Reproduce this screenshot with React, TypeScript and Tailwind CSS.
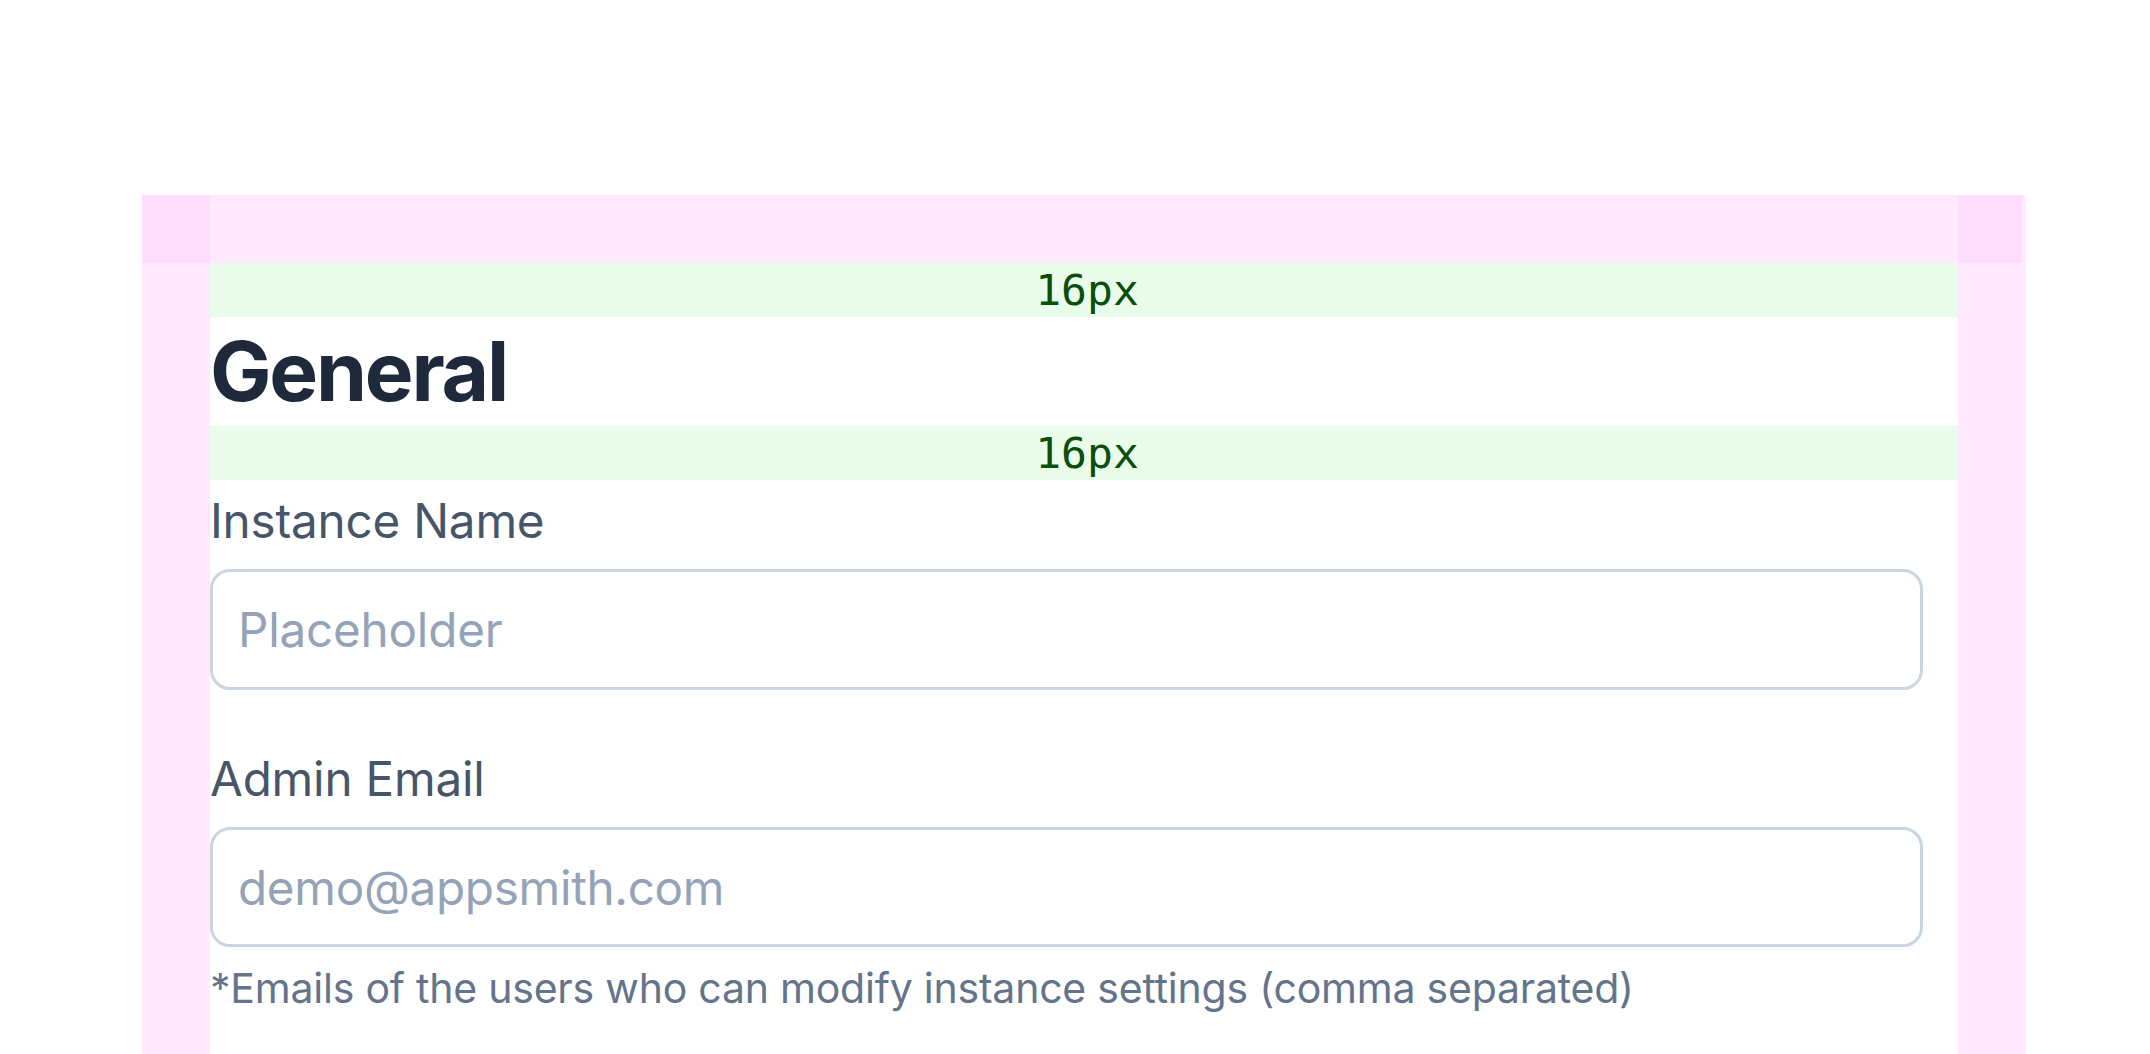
export default function App() {
  return (
    <div
      className="min-h-screen bg-white pt-[195px] pl-[142px]"
      style={{ fontFamily: "Inter, 'Noto Sans', sans-serif" }}
    >
      <div className="w-[1884px] bg-[#fee9fd]">
        <div className="flex h-[68px]">
          <div className="w-[68px] bg-[#fddcfc]" />
          <div className="w-[1748px]" />
          <div className="w-[64px] bg-[#fddcfc]" />
          <div className="w-[4px]" />
        </div>
        <div className="px-[68px] pb-[120px]">
          <div className="bg-white pb-[40px]">
            <div className="flex h-[54px] items-center justify-center bg-[#eafdea] pl-[6px] text-[43px] text-[#0b4f0b] [font-family:'DejaVu_Sans_Mono',monospace]">
              16px
            </div>
            <h1 className="flex h-[109px] items-center text-[82px] font-bold leading-none tracking-[-2.2px] text-[#1e293b]">
              General
            </h1>
            <div className="flex h-[54px] items-center justify-center bg-[#eafdea] pl-[6px] text-[43px] text-[#0b4f0b] [font-family:'DejaVu_Sans_Mono',monospace]">
              16px
            </div>
            <div className="pt-[7px]">
              <label className="block text-[47.6px] leading-[68px] tracking-[-0.2px] text-[#475569]">
                Instance Name
              </label>
              <input
                className="mt-[14px] block h-[121px] w-[1713px] rounded-[20px] border-[3px] border-[#cbd5e1] bg-white px-[25px] text-[47.6px] tracking-[-0.2px] text-[#1e293b] outline-none placeholder:text-[#94a3b8]"
                placeholder="Placeholder"
              />
            </div>
            <div className="pt-[55px]">
              <label className="block text-[47.6px] leading-[68px] tracking-[-0.2px] text-[#475569]">
                Admin Email
              </label>
              <input
                className="mt-[14px] block h-[120px] w-[1713px] rounded-[20px] border-[3px] border-[#cbd5e1] bg-white px-[25px] text-[47.6px] tracking-[-0.3px] text-[#1e293b] outline-none placeholder:text-[#94a3b8]"
                placeholder="demo@appsmith.com"
              />
              <p className="mt-[14px] text-[41px] leading-[54px] tracking-[-0.22px] text-[#64748b]">
                *Emails of the users who can modify instance settings (comma separated)
              </p>
            </div>
          </div>
        </div>
      </div>
    </div>
  );
}
